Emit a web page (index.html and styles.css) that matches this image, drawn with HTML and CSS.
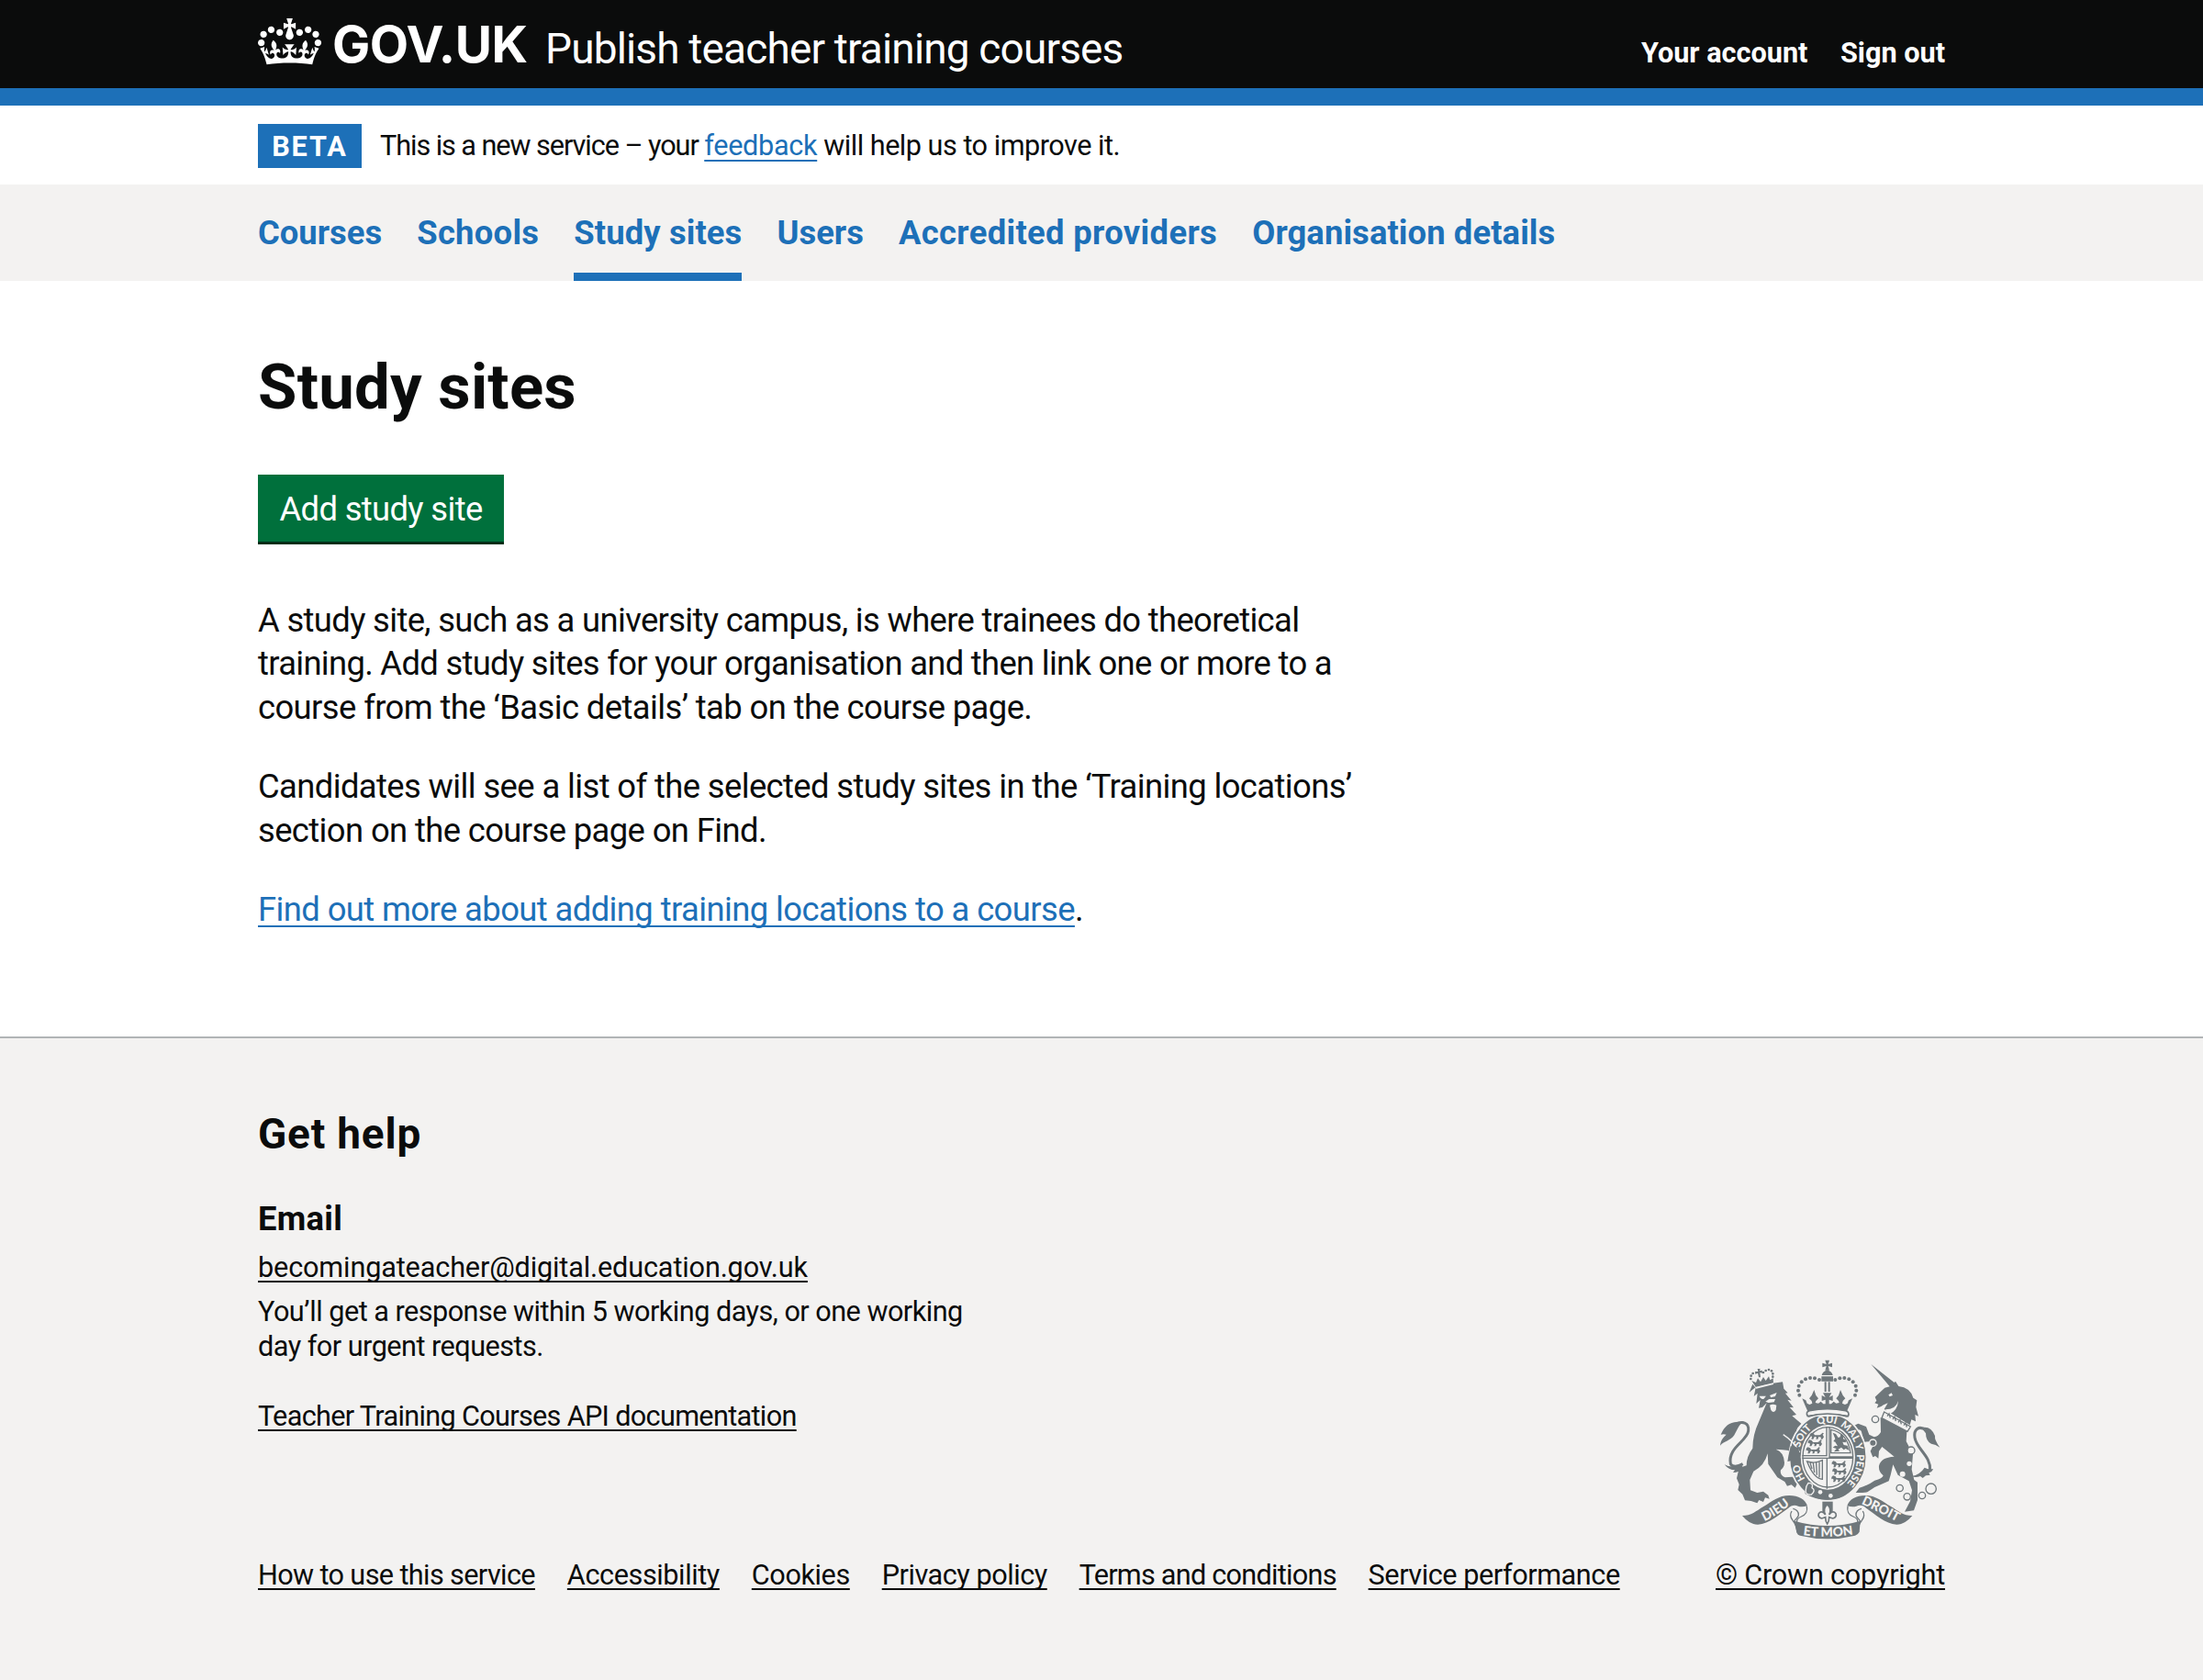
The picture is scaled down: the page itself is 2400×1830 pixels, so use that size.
FILE: index.html
```
<!DOCTYPE html>
<html lang="en">
<head>
<meta charset="utf-8">
<title>Study sites - Publish teacher training courses - GOV.UK</title>
<link rel="stylesheet" href="styles.css">
</head>
<body>
<header class="header">
  <div class="container header-inner">
    <svg class="logo" width="300" height="60" viewBox="0 0 300 60" role="img" aria-label="GOV.UK">
      <g transform="scale(.5235)" fill="#fff">
        <path d="M25 30.2c3.5 1.5 7.7-.2 9.1-3.7 1.5-3.6-.2-7.8-3.9-9.2-3.6-1.4-7.6.3-9.1 3.9-1.4 3.5.3 7.5 3.9 9zM9 39.5c3.6 1.5 7.8-.2 9.2-3.7 1.5-3.6-.2-7.8-3.9-9.1-3.6-1.5-7.6.2-9.1 3.8-1.4 3.5.3 7.5 3.8 9zM4.4 57.2c3.5 1.5 7.7-.2 9.1-3.8 1.5-3.6-.2-7.7-3.9-9.1-3.5-1.5-7.6.3-9.1 3.8-1.4 3.5.3 7.6 3.9 9.1zm38.3-21.4c3.5 1.5 7.7-.2 9.1-3.8 1.5-3.6-.2-7.7-3.9-9.1-3.6-1.5-7.6.3-9.1 3.8-1.3 3.6.4 7.7 3.9 9.1zm64.4-5.6c-3.6 1.5-7.8-.2-9.1-3.7-1.5-3.6.2-7.8 3.8-9.2 3.6-1.4 7.7.3 9.2 3.9 1.3 3.5-.4 7.5-3.9 9zm15.9 9.3c-3.6 1.5-7.7-.2-9.1-3.7-1.5-3.6.2-7.8 3.7-9.1 3.6-1.5 7.7.2 9.2 3.8 1.5 3.5-.3 7.5-3.8 9zm4.7 17.7c-3.6 1.5-7.8-.2-9.2-3.8-1.5-3.6.2-7.7 3.9-9.1 3.6-1.5 7.7.3 9.2 3.8 1.3 3.5-.4 7.6-3.9 9.1zM89.3 35.8c-3.6 1.5-7.8-.2-9.2-3.8-1.4-3.6.2-7.7 3.9-9.1 3.6-1.5 7.7.3 9.2 3.8 1.4 3.6-.3 7.7-3.9 9.1zM69.7 17.7l8.9 4.7V9.3l-8.9 2.8c-.2-.3-.5-.6-.9-.9L72.4 0H59.6l3.5 11.2c-.3.3-.6.5-.9.9l-8.8-2.8v13.1l8.8-4.7c.3.3.6.7.9.9l-5 15.4v.1c-.2.8-.4 1.6-.4 2.4 0 4.1 3.1 7.5 7 8.1h.2c.3 0 .7.1 1 .1.4 0 .7 0 1-.1h.2c4-.6 7.1-4.1 7.1-8.1 0-.8-.1-1.7-.4-2.4V34l-5.1-15.4c.4-.2.7-.6 1-.9zM66 92.8c16.9 0 32.8 1.1 47.1 3.2 4-16.9 8.9-26.7 14-33.5l-9.6-3.4c1 4.9 1.1 7.2 0 10.2-1.5-1.4-3-4.3-4.2-8.7L108.6 76c2.8-2 5-3.2 7.5-3.3-4.4 9.4-10 11.9-13.6 11.2-4.3-.8-6.3-4.6-5.6-7.9 1-4.7 5.7-5.9 8-.5 4.3-8.7-3-11.4-7.6-8.8 7.1-7.2 7.9-13.5 2.1-21.1-8 6.1-8.1 12.3-4.5 20.8-4.7-5.4-12.1-2.5-9.5 6.2 3.4-5.2 7.9-2 7.2 3.1-.6 4.3-6.4 7.8-13.5 7.2-10.3-.9-10.9-8-11.2-13.8 2.5-.5 7.1 1.8 11 7.3L80.2 60c-4.1 4.4-8 5.3-12.3 5.4 1.4-4.4 8-11.6 8-11.6H55.5s6.4 7.2 7.9 11.6c-4.2-.1-8-1-12.3-5.4l1.4 16.4c3.9-5.5 8.5-7.7 10.9-7.3-.3 5.8-.9 12.8-11.1 13.8-7.2.6-12.9-2.9-13.5-7.2-.7-5 3.8-8.3 7.1-3.1 2.7-8.7-4.6-11.6-9.4-6.2 3.7-8.5 3.6-14.7-4.6-20.8-5.8 7.6-5 13.9 2.2 21.1-4.7-2.6-11.9.1-7.7 8.8 2.3-5.5 7.1-4.2 8.1.5.7 3.3-1.3 7.1-5.7 7.9-3.5.7-9-1.8-13.5-11.2 2.5.1 4.7 1.3 7.5 3.3l-4.7-15.4c-1.2 4.4-2.7 7.2-4.3 8.7-1.1-3-.9-5.3 0-10.2l-9.5 3.4c5 6.9 9.9 16.7 14 33.5 14.8-2.1 30.8-3.2 47.7-3.2z"/>
      </g>
      <text class="wordmark" x="81" y="48" textLength="213" lengthAdjust="spacing">GOV.UK</text>
    </svg>
    <span class="product">Publish teacher training courses</span>
    <nav class="account">
      <a href="#">Your account</a>
      <a href="#">Sign out</a>
    </nav>
  </div>
</header>

<div class="container phase">
  <strong class="tag">Beta</strong>
  <span class="phase-text"><span class="p-start">This is a new service – your </span><a class="p-link" href="#">feedback</a><span class="p-end"> will help us to improve it.</span></span>
</div>

<nav class="primary">
  <ul class="container primary-list">
    <li><a class="n1" href="#">Courses</a></li>
    <li><a class="n2" href="#">Schools</a></li>
    <li><a class="n3 current" href="#">Study sites</a></li>
    <li><a class="n4" href="#">Users</a></li>
    <li><a class="n5" href="#">Accredited providers</a></li>
    <li><a class="n6" href="#">Organisation details</a></li>
  </ul>
</nav>

<main class="container main">
  <h1>Study sites</h1>
  <a class="button" href="#">Add study site</a>
  <div class="copy">
    <p class="c1">A study site, such as a university campus, is where trainees do theoretical <span class="c1-mid">training. Add study sites for your organisation and then link one or more to a</span> <span class="c1-end">course from the ‘Basic details’ tab on the course page.</span></p>
    <p class="c2">Candidates will see a list of the selected study sites in the ‘Training locations’ section on the course page on Find.</p>
    <p class="c3"><a href="#">Find out more about adding training locations to a course</a>.</p>
  </div>
</main>

<footer class="footer">
  <div class="container footer-inner">
    <div class="footer-main">
      <h2>Get help</h2>
      <h3>Email</h3>
      <p class="f-email"><a href="#">becomingateacher@digital.education.gov.uk</a></p>
      <p class="f-note">You’ll get a response within 5 working days, or one working day for urgent requests.</p>
      <p class="f-api"><a href="#">Teacher Training Courses API documentation</a></p>
      <ul class="footer-links">
        <li><a class="l1" href="#">How to use this service</a></li>
        <li><a class="l2" href="#">Accessibility</a></li>
        <li><a class="l3" href="#">Cookies</a></li>
        <li><a class="l4" href="#">Privacy policy</a></li>
        <li><a class="l5" href="#">Terms and conditions</a></li>
        <li><a class="l6" href="#">Service performance</a></li>
      </ul>
    </div>
    <div class="copyright">
      <svg class="arms" width="244" height="198" viewBox="36 30 732 594" aria-hidden="true">
        <defs>
          <path id="garter" d="M394 464A95 112 0 0 1 394 240A95 112 0 0 1 394 464"/>
          <path id="dieu" d="M180 564Q225 545 276 503"/>
          <path id="mon" d="M300 604Q394 620 490 602"/>
          <path id="droit" d="M500 503Q550 525 622 564"/>
          <path id="passant" d="M0 6l6-6 8 3 3 5h16l5-3 4-5 5 2-4 4 4 8-5 7h-5l1-6-8-2-3 8h-6l2-6-6-3-5 9H6l2-7-3-4-5 2 2-5z"/>
          <g id="halfcrown">
            <circle cx="366" cy="99" r="6"/><circle cx="351" cy="94" r="6"/><circle cx="336" cy="93" r="6"/><circle cx="321" cy="97" r="6"/><circle cx="308" cy="106" r="6"/><circle cx="299" cy="119" r="6"/><circle cx="297" cy="134" r="6"/><circle cx="301" cy="149" r="6"/>
            <path d="M393 178h-14l-8-8-8 6-10-2 2-6 8-8-8-10-6-18-8 18-8 10 8 8 2 8-9 4-8-4-4-10-12-6 10 24 10 22q32-10 63-10z"/>
          </g>
          <g id="halfscroll">
            <path d="M114 543c30 0 45-15 70-30 28-16 48-36 84-36 30 0 52 12 59 34-10 3-22 4-30 1-12-6-24-2-32 6-30 20-62 52-100 54-20 0-36-12-51-29z"/>
            <path class="line" d="M325 512c4 20-4 28-18 34-12 5-16 10-14 18M276 528c-8 12-4 22 4 32 8 8 12 22 14 38M280 520c10 2 20 10 18 22-1 8-12 12-14 20"/>
          </g>
        </defs>
        <g class="ink">
          <!-- lion -->
          <path d="M137 140l20-16q45-14 89-18l4 22 13 14-8 1 20 24-13-3 20 26-13-1 22 24-14 4 30 25-12 14q-12 20 8 45l18 27 6 48-13 12-12-20-19 6 3-18-16-6-4-20-20-2-22-2q26 8 28 44 0 14-12 24-4 16 14 24l24-2 22 10 12 16-17-6-8 16-12-10-14 4-8-14-24-14-30-44-2-34q-10 40-46 58l-12 28 2 34 22 8 20-4 16 12 4 12-14-4-6 14-14-6-6 10-20-7-20-2-8-20-15-14 4-18-8-20 8-34 24-8q0-30 20-56 0-44 20-86l26-62-14 14-12 2 5-26-13 12 4-34-12 10 6-28-10-12z"/>
          <path d="M159 124l-14-22 14 6 6-14 9 12 9-16 8 12 10-14 4 12 10-6 1 17q-30 4-57 13z"/>
          <path d="M166 72l-2-9h9l-2 7 8-2 1 9-8-2 2 16h-6l-3-14-8 4-1-9z"/>
          <circle cx="142" cy="96" r="4"/><circle cx="143" cy="86" r="4"/><circle cx="149" cy="78" r="4"/><circle cx="183" cy="75" r="4"/><circle cx="191" cy="69" r="4"/><circle cx="201" cy="66" r="4"/><circle cx="210" cy="70" r="4"/><circle cx="214" cy="79" r="4"/><circle cx="214" cy="89" r="4"/>
          <path d="M42 314c2-20 12-28 20-36-6-2-12-2-18 0 10-20 20-36 44-40l32-4c-18 12-22 28-32 46-14 20-32 18-46 34z"/>
          <path d="M56 376q20 12 56 2l6 10q-14 14-34 14l6-8q-20 0-34-18z"/>
          <path class="tail" d="M88 246c26-14 50-8 46 20-4 34-68 54-58 108 6 10 22 10 40 0"/>
          <!-- unicorn -->
          <path d="M535 48l76 60 4-4 10 16q38 4 48 38l12 8-3 22 8 30-11-5 2 22-14-6-5 18-84-52 12-20-14 6q-8 8-22 10l5-12-12-4 6-8-5-12 32-30 16-4z"/>
          <path d="M566 222l86 46-2 32 22 42-4 50 8 34 11 8v58l-12 34-30 4 18-34 6-36-10-30-36-20-16-34-8 34-6 20-46 20-24 16-16 2h-22l12-16q28-8 50-24 26-6 28-16-16-12-14-32 6-28 50-30l-40-32-10 14-2 24-10-8-8 4-8-20 10-20 10-12-40 2-10-36-6-4-8 6-12-18 16-8 26 10 10 26 16 8q14-2 22-16z"/>
          <path class="tail" d="M716 264c-26-18-42-2-38 24 6 38 54 60 50 108"/>
          <path d="M700 256q30-8 44 26-2 14 16 38-14-10-28-12-18-8-18-34z"/>
          <path d="M668 414q26-4 42-28 14 8 28 4-4 12-14 12l4 8-14 2-10 8-8-6q-16 6-28 0z"/>
          <g class="rings"><circle cx="549" cy="228" r="11"/><circle class="ring-light" cx="541" cy="305" r="11"/><circle cx="629" cy="453" r="11"/><circle cx="653" cy="481" r="11"/><circle cx="702" cy="477" r="11"/><circle cx="731" cy="455" r="17"/></g>
          <!-- crown -->
          <use href="#halfcrown"/><use href="#halfcrown" transform="matrix(-1 0 0 1 784 0)"/>
          <path d="M385 35h14l-4 13 13-4v14l-13-4 4 14h-14l4-14-13 4V44l13 4zM374 84q3-14 18-16 15 2 18 16zM373 88h38v16h-38zM383 106h6v32h-6zM395 106h6v32h-6zM378 142h28l-8 14 12-6v18l-12-4v16h-12v-16l-12 4v-18l12 6z"/>
          <path class="rim" d="M334 200q58-12 118 0 14 4 8 18-66-12-132 0-8-14 6-18z"/>
          <!-- garter and shield -->
          <ellipse class="ring-edge" cx="394" cy="352" rx="126" ry="142"/>
          <path class="rim" d="M330 219q62-18 128 0"/>
        </g>
        <ellipse class="field" cx="394" cy="352" rx="89" ry="106"/>
        <ellipse class="line" cx="394" cy="352" rx="82" ry="98"/>
        <g class="ink">
          <path d="M388 252h4v97h-82v-4h78zM397 252h4v97h74v4h-165v4h79v98h4v-98h84v-4H397z"/>
          <use href="#passant" x="334" y="272"/><use href="#passant" x="328" y="295"/><use href="#passant" x="322" y="319"/>
          <use href="#passant" x="406" y="364"/><use href="#passant" x="408" y="388"/><use href="#passant" x="405" y="412"/>
          <path d="M410 272l10 4 8 12 6-2 2-10 8 4v12l10 4-2 8-10-2 4 10 12 2 6 16-12-6-6 4-8-8-10 6 4 6-18 2 8-10-12-4 8-6 8 2-8-14-6-2 6-8z"/>
        </g>
        <path class="line" d="M404 262q54 10 64 76h-64z"/>
        <path class="harp" d="M326 366q28 8 50-4v62q-28-2-50-58zM336 370l6 20M346 370l4 32M356 370l2 40M366 368v50"/>
        <g class="ink"><path d="M318 440q60 48 146 18l-16 18q-64 32-128-4z"/></g>
        <path class="buckle" d="M330 436q18 0 12 16 14 8-2 22-22 2-18-16 0-12 8-22z"/>
        <g class="field">
          <path d="M170 152l22 0-8 10q-10 0-14-10zM204 150l23-9-5 12-14 4zM190 170l12-8 20 0-4 10-18 2zM204 182q10-6 22 0l-2 16q-8 12-16 0zM592 148l10-6 4 8-10 4zM582 196q34 0 42-28-2 32-30 44zM580 203l82 44-10 20-84-44zM156 123l60-14 0 5-56 14z"/>
          <circle cx="369" cy="466" r="7"/><circle cx="403" cy="478" r="7"/>
          <circle cx="660" cy="373" r="8"/><circle cx="638" cy="407" r="9"/><circle cx="666" cy="330" r="12"/>
        </g>
        <path class="line" d="M578 204l86 48-10 16-84-44zM588 218l6-8 4 14M606 228l6-8 4 14M624 238l6-8 4 14M642 248l6-8 4 14"/>
        <path class="light" d="M248 278q34 22 54 58"/>
        <circle class="line" cx="666" cy="330" r="12"/>
        <g class="motto">
          <text><textPath href="#garter" startOffset="17.500%">HO</textPath></text>
          <text><textPath href="#garter" startOffset="35.500%">SOIT</textPath></text>
          <text><textPath href="#garter" startOffset="49.500%">QUI</textPath></text>
          <text><textPath href="#garter" startOffset="64%">MAL Y</textPath></text>
          <text><textPath href="#garter" startOffset="81.500%">PENSE</textPath></text>
        </g>
        <path class="ink" d="M272 316l26 4 8 48-10 10-14-16-20 4 3-18z"/>
        <!-- scroll -->
        <g class="ink">
          <use href="#halfscroll"/><use href="#halfscroll" transform="matrix(-1 0 0 1 784 0)"/>
          <path d="M284 560q110 32 216 0l-3 36q-4 8-14 12-90 22-180 0-8-2-10-8z"/>
          <path d="M376 497h34v34h-34z"/>
        </g>
        <path class="fleur" d="M392 506q-16 16-6 34-12-16-22-4-4 12 10 16l12-4q0 14 6 22 6-8 6-22l12 4q14-4 10-16-10-12-22 4 10-18-6-34z"/>
        <g class="motto scroll-text">
          <text><textPath href="#dieu" startOffset="50%">DIEU</textPath></text>
          <text><textPath href="#mon" startOffset="50%">ET MON</textPath></text>
          <text><textPath href="#droit" startOffset="50%">DROIT</textPath></text>
        </g>
      </svg>
      <a class="crown" href="#">© Crown copyright</a>
    </div>
  </div>
</footer>
</body>
</html>
```
FILE: styles.css
```
* { box-sizing: border-box; }

body {
  margin: 0;
  min-height: 100vh;
  display: flex;
  flex-direction: column;
  background: #fff;
  color: #0b0c0c;
  font-family: Roboto, "Liberation Sans", sans-serif;
  font-size: 36.4px;
  line-height: 47.9px;
}

h1, h2, h3, p, ul { margin: 0; padding: 0; }
ul { list-style: none; }
a {
  color: inherit;
  text-decoration: underline;
  text-decoration-thickness: 2px;
  text-underline-offset: 5px;
  text-decoration-skip-ink: none;
}

.container { width: 1838px; margin: 0 auto; }

.header { background: #0b0c0c; color: #fff; height: 115px; border-bottom: 19px solid #1d70b8; }
.header-inner { display: flex; align-items: flex-start; }
.logo { display: block; flex: none; margin-top: 20px; overflow: visible; }
.wordmark { font: 700 55px Inter, sans-serif; fill: #fff; }
.product { margin: 30px 0 0 13px; font-size: 45.95px; line-height: 46px; letter-spacing: -.82px; }
.account { display: flex; gap: 35.5px; margin: 38.5px 0 0 auto; font-size: 30.63px; line-height: 38.3px; font-weight: 700; }
.account a { text-decoration: none; }

.phase { display: flex; align-items: center; gap: 20px; padding: 20px 0 18px; height: 86px; font-size: 30.63px; line-height: 38.3px; }
.tag { width: 113px; height: 48px; margin-top: -1px; line-height: 49px; text-align: center; text-transform: uppercase; letter-spacing: 1.9px; background: #1d70b8; color: #fff; }
.phase-text { white-space: pre; }
.p-start { letter-spacing: -1.06px; }
.p-link { letter-spacing: -.31px; color: #1d70b8; }
.p-end { letter-spacing: -.5px; }

.primary { background: #f3f2f1; }
.primary-list { display: flex; gap: 38.1px; height: 105px; font-weight: 700; }
.primary-list a { display: block; padding: 29px 0 18.6px; color: #1d70b8; text-decoration: none; }
.primary-list .current { border-bottom: 9.5px solid #1d70b8; }
.n2 { letter-spacing: .27px; }
.n3 { letter-spacing: .1px; }
.n5 { letter-spacing: .34px; }
.n6 { letter-spacing: .09px; }

.main { display: flex; flex-direction: column; align-items: flex-start; padding: 80px 0 114px; }
h1 { font-size: 68.9px; line-height: 72px; letter-spacing: .23px; margin-bottom: 59px; }
.button { width: 268px; height: 73px; padding-top: 13.5px; text-align: center; background: #00703c; color: #fff; box-shadow: 0 3px 0 #002d18; letter-spacing: -.65px; text-decoration: none; white-space: nowrap; }
.copy { width: 1212px; margin-top: 61.5px; display: grid; gap: 38.2px; }
.c1 { letter-spacing: -.65px; }
.c1-mid { letter-spacing: -.69px; }
.c1-end { letter-spacing: -.59px; }
.c2 { letter-spacing: -.61px; }
.c3 { letter-spacing: -.59px; }
.c3 a { color: #1d70b8; }

.footer { flex: 1; background: #f3f2f1; border-top: 2px solid #b1b4b6; font-size: 30.63px; line-height: 38.3px; }
.footer-inner { display: flex; align-items: flex-end; justify-content: space-between; padding-top: 76px; }
.footer-main h2 { font-size: 45.95px; line-height: 57.4px; letter-spacing: .8px; }
.footer-main h3 { font-size: 36.4px; line-height: 48px; letter-spacing: .26px; margin-top: 39.5px; }
.footer a { text-underline-offset: 4px; }
.f-email { margin-top: 9.6px; letter-spacing: -.14px; }
.f-note { margin-top: 10px; width: 790px; letter-spacing: -.52px; }
.f-api { margin-top: 37.5px; letter-spacing: -.67px; }
.footer-links { display: flex; gap: 34.9px; margin-top: 134.5px; white-space: nowrap; }
.l1 { letter-spacing: -.62px; }
.l2 { letter-spacing: -.41px; }
.l3 { letter-spacing: -.41px; }
.l4 { letter-spacing: -.47px; }
.l5 { letter-spacing: -.74px; }
.l6 { letter-spacing: -.44px; }
.copyright { display: flex; flex-direction: column; align-items: center; gap: 19px; width: 250px; white-space: nowrap; }
.crown { letter-spacing: -.21px; }

.arms { display: block; }
.ink { fill: #6f777b; }
.field { fill: #f3f2f1; }
.line { fill: none; stroke: #6f777b; stroke-width: 4; }
.light { fill: none; stroke: #f3f2f1; stroke-width: 4; }
.ring-edge { stroke: #f3f2f1; stroke-width: 5; }
.ring-light { fill: #6f777b; stroke: #f3f2f1; }
.tail { fill: none; stroke: #6f777b; stroke-width: 9; }
.rings { fill: none; stroke: #6f777b; stroke-width: 4; }
.rim { fill: #f3f2f1; stroke: #6f777b; stroke-width: 5; }
.harp { fill: none; stroke: #6f777b; stroke-width: 4; }
.buckle { fill: #6f777b; stroke: #f3f2f1; stroke-width: 4; }
.fleur { fill: #f3f2f1; stroke: #6f777b; stroke-width: 5; }
.motto { font: 900 33px Lato, sans-serif; fill: #f3f2f1; text-anchor: middle; }
.scroll-text { font-size: 42px; }
```
